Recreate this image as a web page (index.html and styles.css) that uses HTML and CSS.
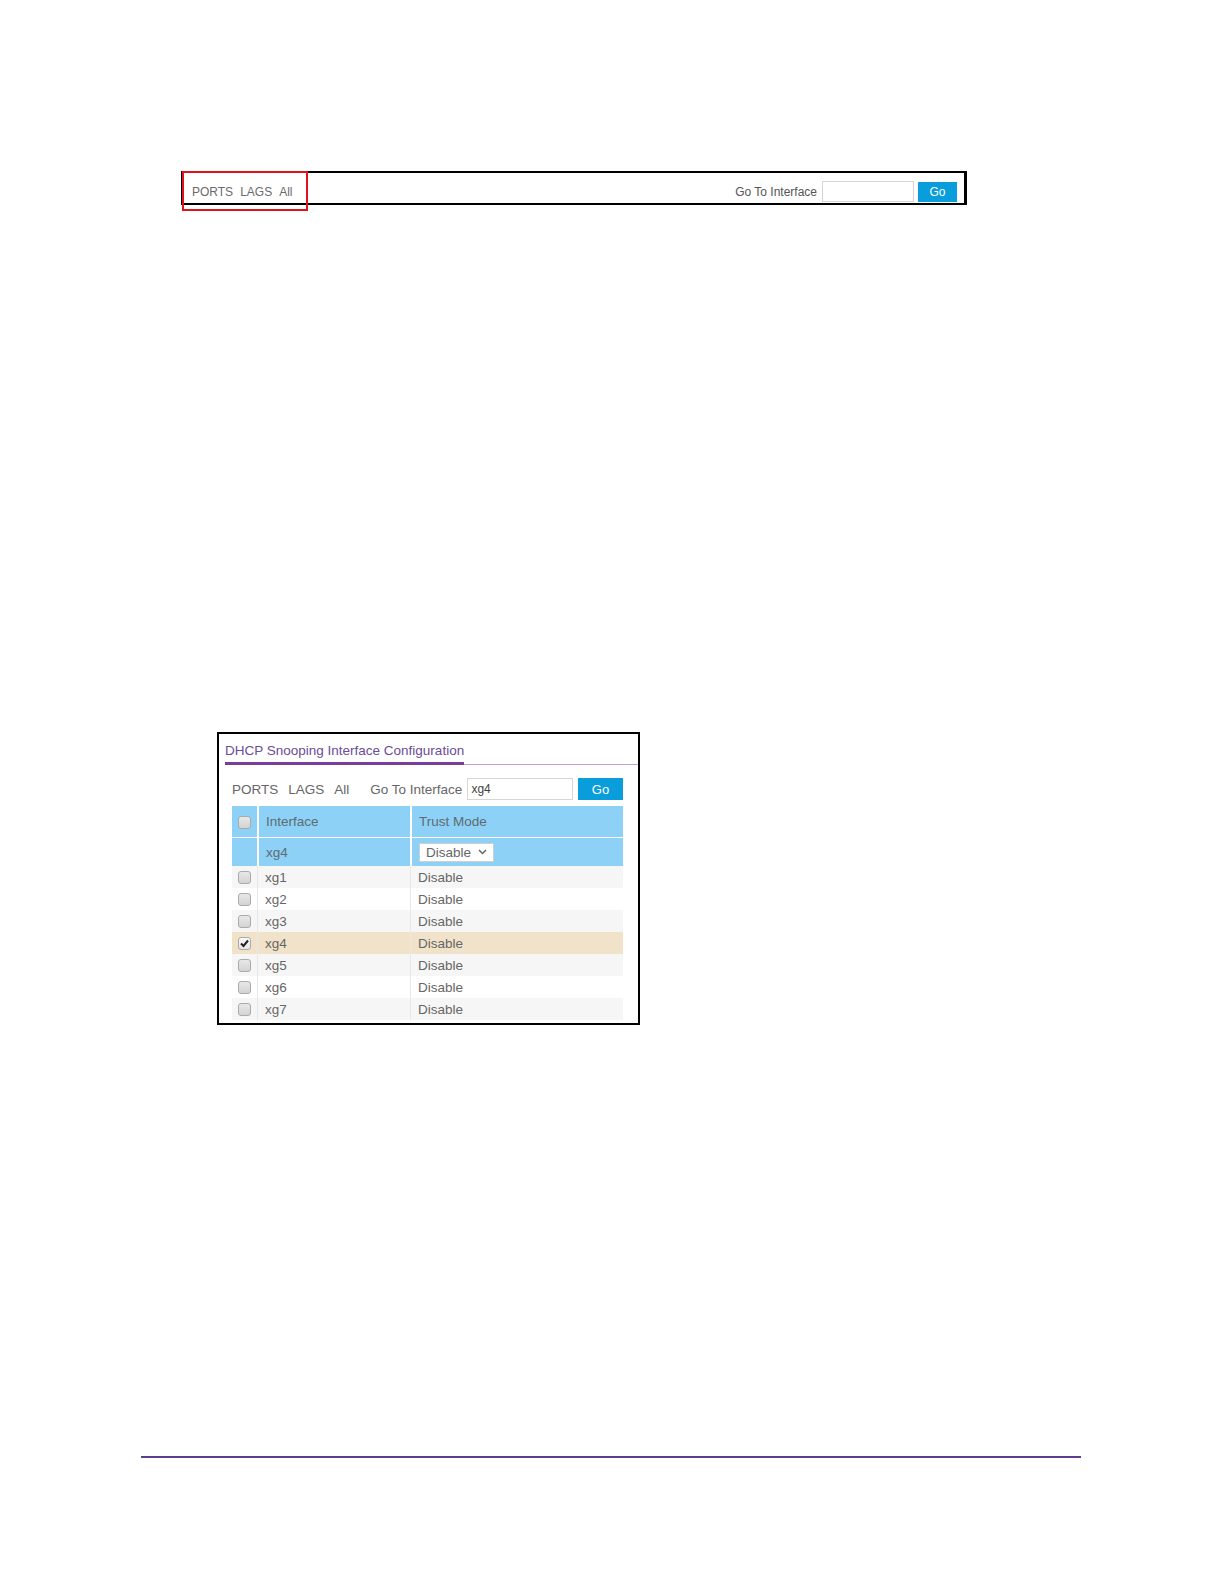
FILE: index.html
```html
<!DOCTYPE html>
<html>
<head>
   <meta charset="UTF-8">
   <title>DHCP Snooping Interface Configuration</title>
   <link rel="stylesheet" href="styles.css">
</head>
<body>
   <div class="filter-bar">
       <div class="filter-links">
           <a href="#" class="filter-link">PORTS</a>
           <a href="#" class="filter-link">LAGS</a>
           <a href="#" class="filter-link">All</a>
       </div>
       <div class="goto">
           <label class="goto-label">Go To Interface</label>
           <input type="text" class="goto-input">
           <button class="go-button">Go</button>
       </div>
       <span class="callout"></span>
   </div>

   <section class="panel">
       <div class="panel-title-bar">
           <h2 class="panel-title">DHCP Snooping Interface Configuration</h2>
       </div>

       <div class="toolbar">
           <div class="toolbar-links">
               <a href="#" class="filter-link">PORTS</a>
               <a href="#" class="filter-link">LAGS</a>
               <a href="#" class="filter-link">All</a>
           </div>
           <label class="toolbar-label">Go To Interface</label>
           <input type="text" class="toolbar-input" value="xg4">
           <button class="go-button toolbar-go">Go</button>
       </div>

       <table class="port-table">
           <colgroup>
               <col class="col-check">
               <col class="col-interface">
               <col class="col-mode">
           </colgroup>
           <thead>
               <tr>
                   <th class="cell-check"><span class="check"></span></th>
                   <th>Interface</th>
                   <th>Trust Mode</th>
               </tr>
           </thead>
           <tbody>
               <tr class="edit-row">
                   <td class="cell-check"></td>
                   <td>xg4</td>
                   <td>
                       <span class="mode-select">Disable
                           <svg width="9" height="6" viewBox="0 0 9 6"><path d="M1 1l3.5 3.5L8 1" fill="none" stroke="#666" stroke-width="1.5"/></svg>
                       </span>
                   </td>
               </tr>
               <tr class="row-shaded">
                   <td class="cell-check"><span class="check"></span></td>
                   <td>xg1</td>
                   <td>Disable</td>
               </tr>
               <tr>
                   <td class="cell-check"><span class="check"></span></td>
                   <td>xg2</td>
                   <td>Disable</td>
               </tr>
               <tr class="row-shaded">
                   <td class="cell-check"><span class="check"></span></td>
                   <td>xg3</td>
                   <td>Disable</td>
               </tr>
               <tr class="row-selected">
                   <td class="cell-check">
                       <span class="check checked">
                           <svg width="11" height="11" viewBox="0 0 11 11"><path d="M2 5.5l2.5 2.5L9 2.5" fill="none" stroke="#222" stroke-width="2"/></svg>
                       </span>
                   </td>
                   <td>xg4</td>
                   <td>Disable</td>
               </tr>
               <tr class="row-shaded">
                   <td class="cell-check"><span class="check"></span></td>
                   <td>xg5</td>
                   <td>Disable</td>
               </tr>
               <tr>
                   <td class="cell-check"><span class="check"></span></td>
                   <td>xg6</td>
                   <td>Disable</td>
               </tr>
               <tr class="row-shaded">
                   <td class="cell-check"><span class="check"></span></td>
                   <td>xg7</td>
                   <td>Disable</td>
               </tr>
           </tbody>
       </table>
   </section>

   <hr class="footer-rule">
</body>
</html>
```

FILE: styles.css
```css
* {
    margin: 0;
    padding: 0;
    box-sizing: border-box;
}

body {
    font-family: 'Liberation Sans', Arial, sans-serif;
    color: #666;
    background-color: #fff;
}

a {
    color: inherit;
    text-decoration: none;
}

/* Interface filter strip */
.filter-bar {
    position: relative;
    display: flex;
    justify-content: space-between;
    align-items: flex-end;
    width: 786px;
    height: 34px;
    margin: 171px 0 0 181px;
    padding: 0 7px 1px 9px;
    border: 2px solid #000;
    border-right-width: 3px;
    font-size: 12px;
}

.filter-links {
    display: flex;
    gap: 7px;
    line-height: 20px;
    color: #6b6b6b;
}

.goto {
    display: flex;
    align-items: flex-end;
}

.goto-label {
    line-height: 20px;
    margin-right: 5px;
    color: #555;
}

.goto-input {
    width: 92px;
    height: 21px;
    margin-right: 4px;
    border: 1px solid #d6d6d6;
    outline: none;
}

.go-button {
    width: 39px;
    height: 20px;
    border: none;
    background-color: #0a9ddb;
    color: #fff;
    font-family: inherit;
    font-size: 12px;
}

/* red highlight drawn over the filter links */
.callout {
    position: absolute;
    left: -1px;
    top: -2px;
    width: 126px;
    height: 40px;
    border: 2px solid #e0131b;
}

/* Configuration panel */
.panel {
    width: 423px;
    height: 293px;
    margin: 527px 0 0 217px;
    border: 2px solid #000;
    overflow: hidden;
}

.panel-title-bar {
    display: flex;
    margin: 9px 0 0 6px;
    border-bottom: 1px solid #b9a3d0;
}

.panel-title {
    font-size: 13.5px;
    font-weight: normal;
    line-height: 15px;
    color: #6b4c98;
    padding-bottom: 4px;
    border-bottom: 3px solid #7a3d9b;
    margin-bottom: -1px;
}

.toolbar {
    display: flex;
    align-items: center;
    height: 22px;
    margin: 13px 15px 0 13px;
    font-size: 13.5px;
    white-space: nowrap;
}

.toolbar-links {
    display: flex;
    gap: 10px;
    flex-shrink: 0;
}

.toolbar-label {
    flex-shrink: 0;
    margin-left: 21px;
    margin-right: 5px;
}

.toolbar-input {
    flex: 1;
    min-width: 0;
    height: 22px;
    padding: 0 3px;
    border: 1px solid #d6d6d6;
    font-family: inherit;
    font-size: 12px;
    color: #444;
    outline: none;
}

.toolbar-go {
    flex-shrink: 0;
    width: 45px;
    height: 22px;
    margin-left: 5px;
    font-size: 13px;
}

/* Port table */
.port-table {
    width: 391px;
    margin: 6px 0 0 13px;
    border-collapse: separate;
    border-spacing: 0;
    table-layout: fixed;
    font-size: 13.5px;
}

.col-check {
    width: 25px;
}

.col-interface {
    width: 153px;
}

.col-mode {
    width: 213px;
}

.port-table th,
.port-table td {
    padding: 0 7px;
    text-align: left;
    font-weight: normal;
    white-space: nowrap;
}

.port-table th {
    height: 32px;
    background-color: #8dd2f6;
    color: #5f6a72;
    border-bottom: 1px solid #fff;
}

.port-table td {
    height: 22px;
}

.port-table th + th {
    border-left: 2px solid #fff;
}

.port-table td + td {
    border-left: 1px solid #e8e8e8;
}

.port-table .cell-check {
    padding: 0;
    text-align: center;
}

.edit-row td {
    height: 28px;
    background-color: #8dd2f6;
    color: #5f6a72;
}

.edit-row td + td {
    border-left: 2px solid #fff;
}

.row-shaded td {
    background-color: #f6f6f6;
}

.row-selected td {
    background-color: #f1e3c9;
}

.check {
    display: inline-flex;
    align-items: center;
    justify-content: center;
    width: 13px;
    height: 13px;
    vertical-align: middle;
    border: 1px solid #aaa;
    border-radius: 3px;
    background: linear-gradient(#e8e8e8, #d3d3d3);
}

.check.checked {
    background: linear-gradient(#fafafa, #e6e6e6);
}

.mode-select {
    display: inline-flex;
    align-items: center;
    justify-content: space-between;
    width: 75px;
    height: 19px;
    padding: 0 6px;
    vertical-align: middle;
    background-color: #fff;
    border: 1px solid #cfcfcf;
    color: #666;
}

.footer-rule {
    width: 940px;
    height: 2px;
    margin: 431px 0 0 141px;
    border: none;
    background-color: #5c3d8e;
}
```
